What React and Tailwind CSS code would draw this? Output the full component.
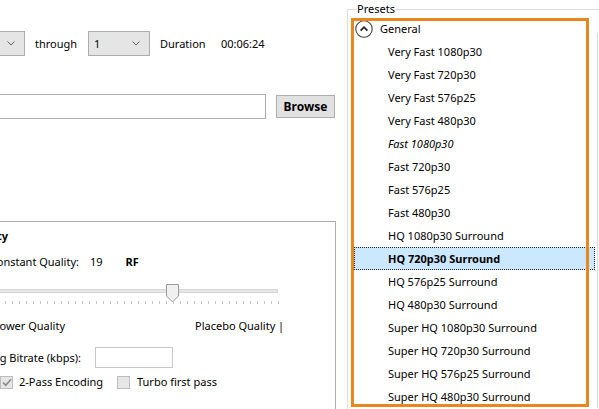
import React from "react";

const presets = [
  { name: "Very Fast 1080p30" },
  { name: "Very Fast 720p30" },
  { name: "Very Fast 576p25" },
  { name: "Very Fast 480p30" },
  { name: "Fast 1080p30", italic: true },
  { name: "Fast 720p30" },
  { name: "Fast 576p25" },
  { name: "Fast 480p30" },
  { name: "HQ 1080p30 Surround" },
  { name: "HQ 720p30 Surround", selected: true },
  { name: "HQ 576p25 Surround" },
  { name: "HQ 480p30 Surround" },
  { name: "Super HQ 1080p30 Surround" },
  { name: "Super HQ 720p30 Surround" },
  { name: "Super HQ 576p25 Surround" },
  { name: "Super HQ 480p30 Surround" },
];

const Chevron = () => (
  <svg width="8" height="5" viewBox="0 0 8 5">
    <path d="M0.5 0.5 L4 4 L7.5 0.5" fill="none" stroke="#606060" strokeWidth="1" />
  </svg>
);

const Dropdown = ({ value, className }) => (
  <div
    className={`flex h-[25px] items-center justify-between border border-[#adadad] bg-[#e5e5e5] pl-[5px] pr-[9px] ${className}`}
  >
    <span>{value}</span>
    <Chevron />
  </div>
);

// right-aligned label, so the clipped start matches the picture
const EndLabel = ({ end, children, className = "" }) => (
  <div
    className={`flex shrink-0 justify-end whitespace-nowrap ${className}`}
    style={{ marginLeft: end - 200, width: 200 }}
  >
    {children}
  </div>
);

const Checkbox = ({ checked }) => (
  <div className="flex h-[13px] w-[13px] shrink-0 items-center justify-center border border-[#bcbcbc] bg-[#e6e6e6]">
    {checked && (
      <svg width="10" height="9" viewBox="0 0 10 9">
        <path d="M1 4.5 L3.8 7.3 L9 1.2" fill="none" stroke="#8a8a8a" strokeWidth="1.6" />
      </svg>
    )}
  </div>
);

const SettingsPanel = () => (
  <div className="flex w-[345px] shrink-0 flex-col overflow-hidden">
    <div className="mt-[31px] flex h-[25px] items-center">
      <Dropdown value="" className="ml-[-35px] w-[60px] shrink-0" />
      <span className="ml-[10px] w-[53px] shrink-0">through</span>
      <Dropdown value="1" className="w-[62px] shrink-0" />
      <span className="ml-[10px] w-[61px] shrink-0">Duration</span>
      <span>00:06:24</span>
    </div>

    <div className="mt-[38px] flex items-center">
      <div className="ml-[-10px] h-[25px] w-[276px] shrink-0 border border-[#adadad] bg-white" />
      <button className="ml-[10px] h-[23px] w-[59px] shrink-0 border border-[#adadad] bg-[#e1e1e1] text-[12px] font-bold">
        Browse
      </button>
    </div>

    <div className="ml-[-10px] mt-[102px] h-[200px] w-[346px] shrink-0 border border-[#adadad]">
      <div className="flex flex-col">
        <div className="mt-[6px] flex h-[16px] items-center">
          <EndLabel end={17} className="font-bold">Quality</EndLabel>
        </div>
        <div className="mt-[10px] flex h-[16px] items-center">
          <EndLabel end={88}>Constant Quality:</EndLabel>
          <span className="ml-[11px]">19</span>
          <span className="ml-[23px] font-bold">RF</span>
        </div>
        <div className="relative mt-[16px] h-[20px]">
          <div className="absolute left-0 top-[3px] h-[4px] w-[287px] border border-[#d6d6d6] bg-[#e7e7e7]" />
          <svg className="absolute left-[175px] top-[-2px]" width="13" height="19" viewBox="0 0 13 19">
            <path d="M0.5 0.5 H12.5 V12 L6.5 18 L0.5 12 Z" fill="#f0f0f0" stroke="#9a9a9a" strokeWidth="1" />
          </svg>
          <div className="absolute left-0 top-[15px] h-[3px] w-[288px] bg-[image:repeating-linear-gradient(90deg,#c4c4c4_0,#c4c4c4_1px,transparent_1px,transparent_7px)]" />
        </div>
        <div className="mt-[12px] flex h-[16px] items-center">
          <EndLabel end={74}>Lower Quality</EndLabel>
          <span className="ml-[130px] whitespace-nowrap">Placebo Quality |</span>
        </div>
        <div className="mt-[13px] flex h-[21px] items-center">
          <EndLabel end={90}>Avg Bitrate (kbps):</EndLabel>
          <div className="ml-[14px] h-[21px] w-[78px] shrink-0 border border-[#c8c8c8] bg-white" />
        </div>
        <div className="mt-[6px] flex h-[16px] items-center">
          <div className="ml-[9px]" />
          <Checkbox checked />
          <span className="ml-[6px] w-[98px] shrink-0 whitespace-nowrap">2-Pass Encoding</span>
          <Checkbox />
          <span className="ml-[7px] whitespace-nowrap">Turbo first pass</span>
        </div>
      </div>
    </div>
  </div>
);

const CollapseIcon = () => (
  <svg width="18" height="18" viewBox="0 0 18 18">
    <circle cx="9" cy="9" r="8.2" fill="white" stroke="#444" strokeWidth="1.1" />
    <path d="M5.6 10.6 L9 7.2 L12.4 10.6" fill="none" stroke="#222" strokeWidth="1.8" />
  </svg>
);

const PresetsPanel = () => (
  <div className="relative flex-1">
    <div className="ml-[2px] mt-[9px] h-[420px] border-l border-t border-[#dcdcdc]">
      <div className="relative mt-[-9px] ml-[8px] w-fit bg-white px-[1px] leading-[16px]">Presets</div>
      <div className="ml-[5px] flex">
        <div className="flex w-[242px] flex-col">
          <div className="flex h-[23px] items-center pl-[2px]">
            <CollapseIcon />
            <span className="ml-[7px]">General</span>
          </div>
          {presets.map((p) =>
            p.selected ? (
              <div
                key={p.name}
                className="ml-[1px] flex h-[23px] items-center border border-dotted border-[#222] bg-[#cce8ff] pl-[33px] font-bold"
              >
                {p.name}
              </div>
            ) : (
              <div
                key={p.name}
                className={`flex h-[23px] items-center pl-[35px] ${p.italic ? "italic" : ""}`}
              >
                {p.name}
              </div>
            )
          )}
        </div>
        <div className="ml-[2px] mt-[16px] w-[1px] bg-[#dcdcdc]" />
      </div>
    </div>
    {/* highlight annotation */}
    <div className="pointer-events-none absolute left-[6px] top-[18px] h-[389px] w-[238px] border-[3px] border-[#e8871e]" />
  </div>
);

export default function App() {
  return (
    <div className="flex h-[409px] w-[599px] overflow-hidden bg-white font-['Noto_Sans',sans-serif] text-[11px] leading-[16px] text-black">
      <SettingsPanel />
      <PresetsPanel />
    </div>
  );
}
